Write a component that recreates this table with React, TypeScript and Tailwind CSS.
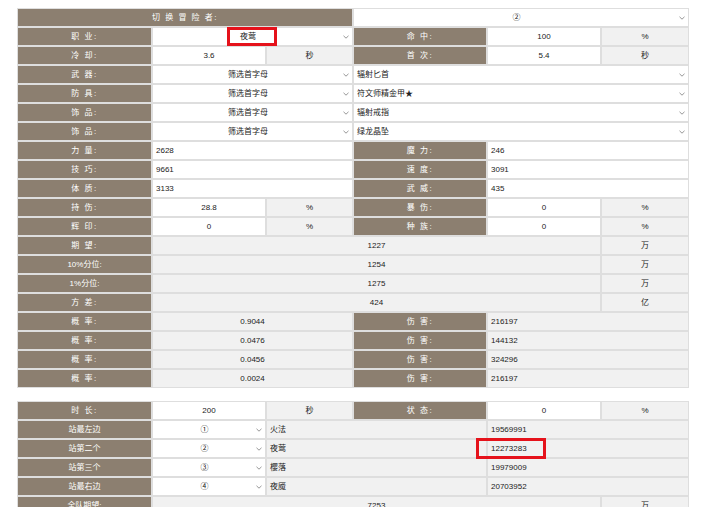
import React from "react";

type Cell = {
  t: "label" | "white" | "grey" | "sel";
  text: string;
  span?: number;
  align?: "left" | "center";
  spaced?: boolean;
  mark?: "a" | "b";
};

const spanCls: Record<number, string> = {
  1: "col-span-1",
  2: "col-span-2",
  3: "col-span-3",
  4: "col-span-4",
};

function Chevron() {
  return (
    <svg width="6" height="4" viewBox="0 0 6 4" className="shrink-0 mr-[3px]">
      <path d="M0.5 0.8 L3 3.2 L5.5 0.8" fill="none" stroke="#8a8a8a" strokeWidth="0.9" />
    </svg>
  );
}

function CellView({ c }: { c: Cell }) {
  const span = spanCls[c.span ?? 1];
  if (c.t === "label") {
    return (
      <div
        className={`${span} bg-[#8c7f70] text-white flex items-center justify-center whitespace-pre ${
          c.spaced ? "tracking-[1.5px]" : ""
        }`}
      >
        {c.text}
      </div>
    );
  }
  if (c.t === "sel") {
    return (
      <div className={`${span} bg-white flex items-center relative`}>
        <div
          className={`flex-1 ${c.align === "left" ? "text-left pl-[3px]" : "text-center"} text-[#222]`}
        >
          {c.text}
        </div>
        <Chevron />
        {c.mark === "a" && (
          <div className="absolute left-1/2 -translate-x-1/2 -ml-[1px] top-[-1px] w-[50px] h-[19px] border-[3px] border-[#e5121b]" />
        )}
      </div>
    );
  }
  const bg = c.t === "white" ? "bg-white" : "bg-[#f1f1f1]";
  return (
    <div
      className={`${span} ${bg} flex items-center relative text-[#222] ${
        c.align === "left" ? "justify-start pl-[3px]" : "justify-center"
      }`}
    >
      {c.text}
      {c.mark === "b" && (
        <div className="absolute left-[-12px] top-[-2px] w-[70px] h-[21px] border-[3px] border-[#e5121b]" />
      )}
    </div>
  );
}

const L = (text: string, span = 1): Cell => {
  const spaced = /^[\u4e00-\u9fff]{2}:$/.test(text) || text === "切换冒险者:";
  const shown = spaced ? text.slice(0, -1).split("").join(" ") + ":" : text;
  return { t: "label", text: shown, span, spaced };
};
const W = (text: string, span = 1, align: "left" | "center" = "center"): Cell => ({ t: "white", text, span, align });
const G = (text: string, span = 1, align: "left" | "center" = "center"): Cell => ({ t: "grey", text, span, align });
const S = (text: string, span = 1, align: "left" | "center" = "center", mark?: "a" | "b"): Cell => ({
  t: "sel",
  text,
  span,
  align,
  mark,
});

const table1: Cell[][] = [
  [L("切换冒险者:", 3), S("②", 3)],
  [L("职业:"), S("夜莺", 2, "center", "a"), L("命中:"), W("100"), G("%")],
  [L("冷却:"), W("3.6"), G("秒"), L("首次:"), W("5.4"), G("秒")],
  [L("武器:"), S("筛选首字母", 2), S("辐射匕首", 3, "left")],
  [L("防具:"), S("筛选首字母", 2), S("符文师精金甲★", 3, "left")],
  [L("饰品:"), S("筛选首字母", 2), S("辐射戒指", 3, "left")],
  [L("饰品:"), S("筛选首字母", 2), S("绿龙晶坠", 3, "left")],
  [L("力量:"), W("2628", 2, "left"), L("魔力:"), W("246", 2, "left")],
  [L("技巧:"), W("9661", 2, "left"), L("速度:"), W("3091", 2, "left")],
  [L("体质:"), W("3133", 2, "left"), L("武威:"), W("435", 2, "left")],
  [L("持伤:"), W("28.8"), G("%"), L("暴伤:"), W("0"), G("%")],
  [L("辉印:"), W("0"), G("%"), L("种族:"), W("0"), G("%")],
  [L("期望:"), G("1227", 4), G("万")],
  [L("10%分位:"), G("1254", 4), G("万")],
  [L("1%分位:"), G("1275", 4), G("万")],
  [L("方差:"), G("424", 4), G("亿")],
  [L("概率:"), G("0.9044", 2), L("伤害:"), G("216197", 2, "left")],
  [L("概率:"), G("0.0476", 2), L("伤害:"), G("144132", 2, "left")],
  [L("概率:"), G("0.0456", 2), L("伤害:"), G("324296", 2, "left")],
  [L("概率:"), G("0.0024", 2), L("伤害:"), G("216197", 2, "left")],
];

const table2: Cell[][] = [
  [L("时长:"), W("200"), G("秒"), L("状态:"), W("0"), G("%")],
  [L("站最左边"), S("①"), G("火法", 2, "left"), G("19569991", 2, "left")],
  [L("站第二个"), S("②"), G("夜莺", 2, "left"), { ...G("12273283", 2, "left"), mark: "b" }],
  [L("站第三个"), S("③"), G("樱落", 2, "left"), G("19979009", 2, "left")],
  [L("站最右边"), S("④"), G("夜魇", 2, "left"), G("20703952", 2, "left")],
  [L("全队期望:"), G("7253", 4), G("万")],
];

function Grid({ rows }: { rows: Cell[][] }) {
  return (
    <div className="grid grid-cols-[133px_112px_85px_132px_112px_86px] auto-rows-[17px] gap-[2px] p-[1px] bg-[#dedede] w-max">
      {rows.flatMap((r, i) => r.map((c, j) => <CellView key={`${i}-${j}`} c={c} />))}
    </div>
  );
}

export default function App() {
  return (
    <div
      className="bg-white w-[720px] min-h-[507px] pl-[17px] pt-[8px] text-[8px] leading-none"
      style={{ fontFamily: '"Liberation Sans", "Noto Sans CJK SC", sans-serif' }}
    >
      <Grid rows={table1} />
      <div className="h-[13px]" />
      <Grid rows={table2} />
    </div>
  );
}
